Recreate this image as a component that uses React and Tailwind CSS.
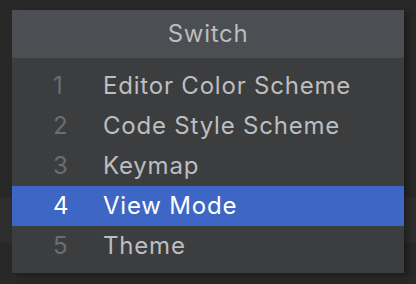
const items = [
  { n: 1, label: 'Editor Color Scheme' },
  { n: 2, label: 'Code Style Scheme' },
  { n: 3, label: 'Keymap' },
  { n: 4, label: 'View Mode', active: true },
  { n: 5, label: 'Theme' },
];

export default function App() {
  return (
    <div className="relative w-[416px] h-[284px] bg-[#282828] overflow-hidden font-['Inter',sans-serif]">
      {/* faint editor row behind the popup */}
      <div className="absolute left-0 right-0 top-[198px] h-[44px] bg-[#2e2e2e]" />
      <div className="absolute left-[12px] top-[10px] w-[392px] flex flex-col bg-[#3c3d3f] shadow-[4px_2px_6px_rgba(0,0,0,0.35)]">
        <div className="h-[48px] flex items-center justify-center bg-[#4b4e52] text-[#bcbcbc] text-[24px] tracking-[0.7px]">
          Switch
        </div>
        <ul className="flex flex-col pt-[8px] pb-[7px] tracking-[0.8px]">
          {items.map((it) => (
            <li
              key={it.n}
              className={`h-[40px] flex items-center text-[24px] ${
                it.active ? 'bg-[#3d66c5] text-white' : 'text-[#bcbec0]'
              }`}
            >
              <span className={`w-[91px] pl-[41px] ${it.active ? 'text-white' : 'text-[#6b6d70]'}`}>
                {it.n}
              </span>
              <span>{it.label}</span>
            </li>
          ))}
        </ul>
      </div>
    </div>
  );
}
